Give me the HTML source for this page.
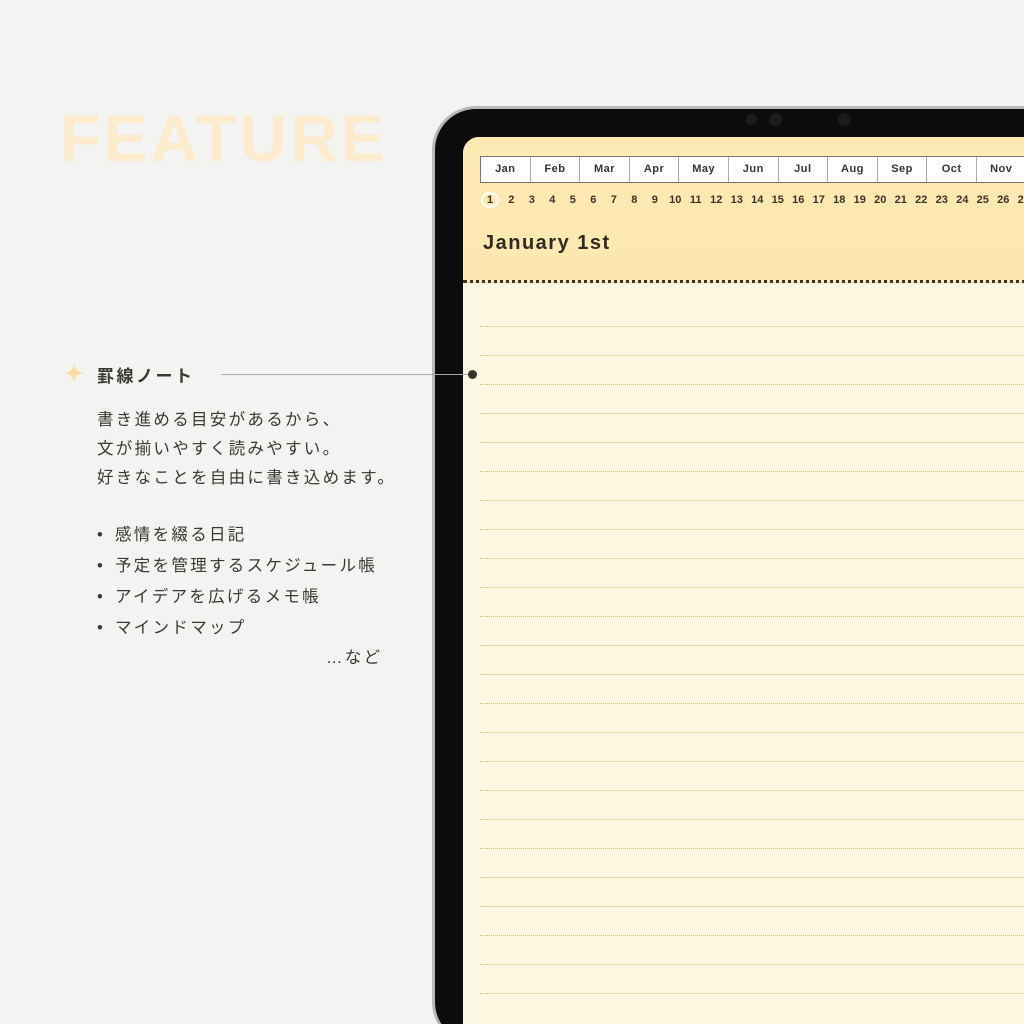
<!DOCTYPE html>
<html><head><meta charset="utf-8"><style>
*{margin:0;padding:0;box-sizing:border-box}
html,body{width:1024px;height:1024px;overflow:hidden}
body{background:#f3f3f1;position:relative;font-family:"Liberation Sans","Noto Sans CJK JP",sans-serif}
.feat{position:absolute;left:60px;top:100px;font-size:66px;font-weight:bold;color:#fcebcc;letter-spacing:3px}
.dev{position:absolute;left:432px;top:106px;width:640px;height:940px;background:#0c0c0c;border-radius:44px;border:3px solid #b9b9b9}
.scr{position:absolute;left:463px;top:137px;width:600px;height:887px;background:#fdf8e2;border-radius:16px 0 0 0;overflow:hidden}
.hdr{position:absolute;left:0;top:0;width:100%;height:146px;background:linear-gradient(#fde9b4,#fde7b0);border-bottom:3px dotted #3a332a}
.tabs{position:absolute;left:17px;top:19px;height:27px;display:flex;border:1px solid #777;background:#fff}
.tabs div{width:49.6px;border-right:1px solid #aaa;font-size:11px;font-weight:bold;color:#333;text-align:center;line-height:25px;letter-spacing:.5px}
.nums{position:absolute;left:18px;top:55px;font-size:11px;font-weight:bold;color:#3a332a;white-space:nowrap}
.nums span{display:inline-block;width:20.5px;text-align:center}
.title{position:absolute;left:20px;top:95px;font-size:20px;font-weight:bold;color:#2f2a24;letter-spacing:1.5px}
.line{position:absolute;left:17px;width:600px;border-top:1.5px dotted #d8bd6e}
.cam{position:absolute;border-radius:50%;background:#1c1c1c}
.t{position:absolute;color:#3b3833;font-size:16.5px;letter-spacing:2.3px}
</style></head><body>
<div class="feat">FEATURE</div>
<div class="dev"></div>
<div class="cam" style="left:746px;top:114px;width:11px;height:11px"></div>
<div class="cam" style="left:769px;top:113px;width:13px;height:13px"></div>
<div class="cam" style="left:838px;top:113px;width:13px;height:13px"></div>
<div class="scr">
<div class="hdr">
<div class="tabs"><div>Jan</div><div>Feb</div><div>Mar</div><div>Apr</div><div>May</div><div>Jun</div><div>Jul</div><div>Aug</div><div>Sep</div><div>Oct</div><div>Nov</div><div>Dec</div></div>
<div class="nums"><span style="border:2px solid #fff;border-radius:50%;width:18px;margin-right:2px">1</span><span>2</span><span>3</span><span>4</span><span>5</span><span>6</span><span>7</span><span>8</span><span>9</span><span>10</span><span>11</span><span>12</span><span>13</span><span>14</span><span>15</span><span>16</span><span>17</span><span>18</span><span>19</span><span>20</span><span>21</span><span>22</span><span>23</span><span>24</span><span>25</span><span>26</span><span>27</span><span>28</span></div>
<div class="title">January 1st</div>
</div>
<div class="line" style="top:189px"></div><div class="line" style="top:218px"></div><div class="line" style="top:247px"></div><div class="line" style="top:276px"></div><div class="line" style="top:305px"></div><div class="line" style="top:334px"></div><div class="line" style="top:363px"></div><div class="line" style="top:392px"></div><div class="line" style="top:421px"></div><div class="line" style="top:450px"></div><div class="line" style="top:479px"></div><div class="line" style="top:508px"></div><div class="line" style="top:537px"></div><div class="line" style="top:566px"></div><div class="line" style="top:595px"></div><div class="line" style="top:624px"></div><div class="line" style="top:653px"></div><div class="line" style="top:682px"></div><div class="line" style="top:711px"></div><div class="line" style="top:740px"></div><div class="line" style="top:769px"></div><div class="line" style="top:798px"></div><div class="line" style="top:827px"></div><div class="line" style="top:856px"></div>
</div>
<svg style="position:absolute;left:64px;top:363px" width="20" height="20" viewBox="0 0 20 20"><path d="M10 0 Q11 9 20 10 Q11 11 10 20 Q9 11 0 10 Q9 9 10 0Z" fill="#fbdca3"/></svg>
<div class="t" style="left:97px;top:362px;font-weight:bold;font-size:17px;letter-spacing:2.5px">罫線ノート</div>
<div style="position:absolute;left:221px;top:374px;width:252px;border-top:1px solid #aaa"></div>
<div style="position:absolute;left:468px;top:370px;width:9px;height:9px;border-radius:50%;background:#3a332a"></div>
<div class="t" style="left:97px;top:406px;line-height:29px">書き進める目安があるから、<br>文が揃いやすく読みやすい。<br>好きなことを自由に書き込めます。</div>
<div class="t" style="left:97px;top:520px;line-height:31px"><span style="display:inline-block;width:18px">•</span>感情を綴る日記<br><span style="display:inline-block;width:18px">•</span>予定を管理するスケジュール帳<br><span style="display:inline-block;width:18px">•</span>アイデアを広げるメモ帳<br><span style="display:inline-block;width:18px">•</span>マインドマップ</div>
<div class="t" style="left:326px;top:644px">…など</div>
</body></html>
